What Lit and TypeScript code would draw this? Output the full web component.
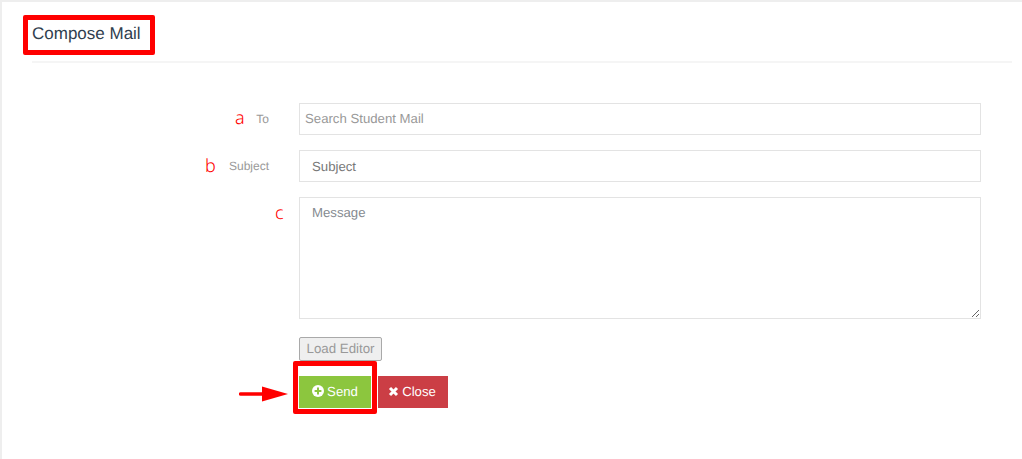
import { LitElement, html, css } from "lit";
import { customElement } from "lit/decorators.js";

@customElement("app-root")
export class AppRoot extends LitElement {
  static styles = css`
    :host {
      display: block;
      width: 1022px;
      height: 459px;
      overflow: hidden;
      background: #eeeeee;
      font-family: "Liberation Sans", Arial, sans-serif;
      text-rendering: geometricPrecision;
      box-sizing: border-box;
      padding: 2px 0 0 2px;
      position: relative;
    }
    .card {
      background: #fff;
      height: 457px;
      box-sizing: border-box;
      padding: 0 10px 0 30px;
    }
    .head {
      height: 61px;
      box-sizing: border-box;
      border-bottom: 2px solid #f5f5f5;
      padding-top: 20px;
      font-size: 17px;
      line-height: 24px;
      color: #2f3e4e;
    }
    .form {
      margin: 40px 31px 0 0;
      display: grid;
      grid-template-columns: 237px 682px;
      column-gap: 30px;
      row-gap: 15px;
      justify-content: start;
    }
    label {
      font-size: 12px;
      color: #999;
      text-align: right;
      line-height: 32px;
    }
    input,
    textarea {
      display: block;
      width: 682px;
      margin: 0;
      box-sizing: border-box;
      border: 1px solid #e3e3e3;
      border-radius: 0;
      background: #fff;
      outline: none;
      font-family: inherit;
      text-rendering: geometricPrecision;
      font-size: 13.2px;
      color: #555;
    }
    input {
      height: 32px;
      padding: 0 12px;
    }
    input.search {
      padding: 0 5px 2px;
    }
    textarea {
      height: 122px;
      padding: 5px 12px;
      line-height: 20px;
      resize: vertical;
    }
    ::placeholder {
      color: #858a90;
      opacity: 1;
    }
    .search::placeholder {
      color: #999;
    }
    input.subject::placeholder {
      color: #777;
    }
    .stack {
      grid-column: 2;
      margin-top: 3px;
      display: flex;
      flex-direction: column;
      align-items: flex-start;
      gap: 15px;
    }
    .load {
      height: 24px;
      width: 83px;
      padding: 0 0 2px;
      box-sizing: border-box;
      border: 1px solid #a9a9a9;
      border-radius: 2px;
      background: #efefef;
      color: #999;
      font-family: inherit;
      text-rendering: geometricPrecision;
      font-size: 13.3px;
    }
    .actions {
      display: flex;
      gap: 7px;
    }
    .btn {
      height: 32px;
      box-sizing: border-box;
      border: 0;
      padding: 0 0 2px;
      color: #fff;
      font-family: inherit;
      text-rendering: geometricPrecision;
      font-size: 13.2px;
      display: flex;
      align-items: center;
      justify-content: center;
      gap: 3px;
    }
    .btn svg {
      display: block;
    }
    .send {
      width: 72px;
      background: #8cc63e;
    }
    .close {
      width: 70px;
      padding-right: 2px;
      background: #cb3e45;
    }
    .note {
      position: absolute;
      color: #f00;
      font-family: "Noto Sans", sans-serif;
      font-weight: 300;
      font-size: 18px;
      line-height: 20px;
    }
    .a {
      left: 235px;
      top: 108px;
    }
    .b {
      left: 205px;
      top: 156px;
    }
    .c {
      left: 275px;
      top: 203px;
    }
    .box {
      position: absolute;
      box-sizing: border-box;
      border: 5px solid #f00;
      border-radius: 2px;
    }
    .box-title {
      left: 23px;
      top: 15px;
      width: 132px;
      height: 40px;
    }
    .box-send {
      left: 293px;
      top: 361px;
      width: 84px;
      height: 53px;
    }
    .arrow {
      position: absolute;
      left: 239px;
      top: 386px;
    }
  `;

  render() {
    return html`
      <div class="card">
        <div class="head">Compose Mail</div>
        <div class="form">
          <label>To</label>
          <input class="search" placeholder="Search Student Mail" />
          <label>Subject</label>
          <input class="subject" placeholder="Subject" />
          <label></label>
          <textarea placeholder="Message"></textarea>
          <div class="stack">
            <button class="load">Load Editor</button>
            <div class="actions">
              <button class="btn send">
                <svg width="12" height="12" viewBox="0 0 12 12">
                  <circle cx="6" cy="6" r="6" fill="#fff" />
                  <path d="M6 2.6v6.8M2.6 6h6.8" stroke="#8cc63e" stroke-width="2" />
                </svg>
                Send
              </button>
              <button class="btn close">
                <svg width="11" height="11" viewBox="0 0 11 11">
                  <path d="M2 2l7 7M9 2l-7 7" stroke="#fff" stroke-width="3" />
                </svg>
                Close
              </button>
            </div>
          </div>
        </div>
      </div>
      <span class="note a">a</span>
      <span class="note b">b</span>
      <span class="note c">c</span>
      <div class="box box-title"></div>
      <div class="box box-send"></div>
      <svg class="arrow" width="49" height="16" viewBox="0 0 49 16">
        <path d="M1.5 8H24" stroke="#f00" stroke-width="3.5" stroke-linecap="round" />
        <path d="M23 0.5L49 8L23 15.5Z" fill="#f00" />
      </svg>
    `;
  }
}
